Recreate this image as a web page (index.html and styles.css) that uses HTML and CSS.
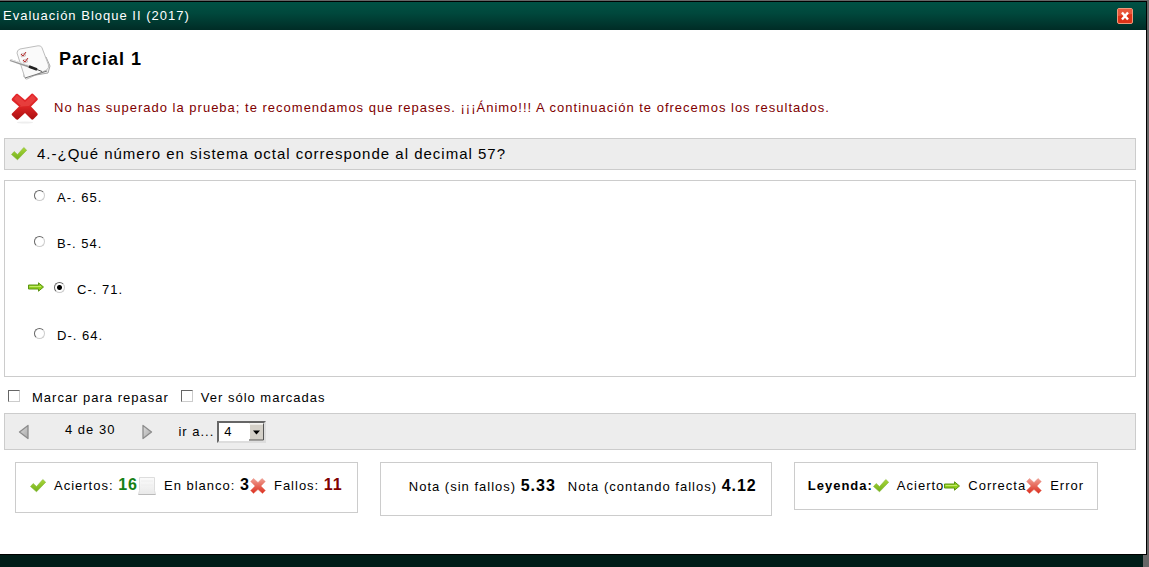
FILE: index.html
```html
<!DOCTYPE html>
<html lang="es">
<head>
<meta charset="utf-8">
<title>Evaluación Bloque II (2017)</title>
<link rel="stylesheet" href="styles.css">
</head>
<body>
<svg class="defs" aria-hidden="true">
  <defs>
    <linearGradient id="green" x1="0" y1="0" x2="0" y2="1"><stop offset="0" stop-color="#a9d638"/><stop offset="1" stop-color="#72b01c"/></linearGradient>
    <linearGradient id="red" x1="0" y1="0" x2="0" y2="1"><stop offset="0" stop-color="#f0a093"/><stop offset="1" stop-color="#dc2e1e"/></linearGradient>
    <linearGradient id="deep" x1="0" y1="0" x2="0" y2="1"><stop offset="0" stop-color="#e5262b"/><stop offset=".5" stop-color="#dc2424"/><stop offset="1" stop-color="#a90f10"/></linearGradient>
    <linearGradient id="grey" x1="0" y1="0" x2="1" y2="1"><stop offset="0" stop-color="#dcdcdc"/><stop offset="1" stop-color="#a8a8a8"/></linearGradient>
    <linearGradient id="paper" x1="0" y1="0" x2="0" y2="1"><stop offset="0" stop-color="#fbfbfb"/><stop offset="1" stop-color="#e9e9e9"/></linearGradient>
    <symbol id="check" viewBox="0 0 16 16"><path d="M.5 8.500 3.200 5.500l3.300 3L12.800 1.500 15.700 4.200 6.500 13.800Z" fill="url(#green)" stroke="#86b83a" stroke-width=".6"/></symbol>
    <symbol id="arrow" viewBox="0 0 16 16"><path d="M.5 6h10V3.800L15.500 8l-5 4.200V10H.5Z" fill="#8fcf1d" stroke="#5d9414"/><path d="M1.500 7.500H13" stroke="#c4ea68"/></symbol>
    <symbol id="cross" viewBox="0 0 16 16"><path d="M3.500.5 8 4.500l4-4L15.300 3.500 11 8l4.500 4.500-3 3L8 11.500l-4.500 4-3-3L5 8 .7 3.500Z" fill="url(#red)" stroke="#e8887c" stroke-width=".5"/></symbol>
  </defs>
</svg>
<main class="window">
  <header class="titlebar">
    <span>Evaluación Bloque II (2017)</span>
    <button class="close" type="button" aria-label="Cerrar">
      <svg viewBox="0 0 16 16"><rect x=".5" y=".5" width="15" height="15" rx="1.500" fill="#dc3217" stroke="#ef9a7d"/><path d="M1 8V1h14v5Z" fill="#e8583c"/><path d="m5 4.500 6 7m0-7-6 7" stroke="#fff" stroke-width="2.400"/></svg>
    </button>
  </header>
  <div class="content">
    <div class="heading">
      <svg class="exam" viewBox="0 0 42 36" aria-hidden="true"><path d="M15 32 39 28l2-7-4-9-22 10Z" fill="#eee" stroke="#a5a5a5"/><path d="M8 8Q8 5 11 4L29 .8q3-.6 4 2L39.500 20q.8 3-2 5L18 34q-1.500.5-2-1Z" fill="#fafafa" stroke="#bdbdbd"/><path d="M16 33 38 26" stroke="#777"/><path d="m12 9 4-1 .5 3-4 1Zm2 6 4-1 .5 3-4 1Z" fill="#f6e5e5" stroke="#b9a5a5" stroke-width=".6"/><path d="m12 9 2 2 3-4m-3 8 2 2 3-4" fill="none" stroke="#b42a2a"/><path d="M1 15 24 23" stroke="#999" stroke-width="2"/><path d="M1 14.500 22 21" stroke="#e8e8e8"/><path d="m20 21.500 8 3" stroke="#222" stroke-width="2.500"/><path d="m28 24.500 5 2" stroke="#555"/></svg>
      <h1>Parcial 1</h1>
    </div>
    <div class="result">
      <svg class="fail" viewBox="0 0 28 31" aria-hidden="true"><ellipse cx="14" cy="29.500" rx="8" ry="1" fill="#eee"/><path d="M6.500.8 14 7l6.500-6.200q1-.6 2 .4l4 4q.8 1 0 1.800L20 13.500l6.500 7q.6 1-.2 1.800l-4 4q-1 .7-2 0L14 20l-7 6.500q-1 .6-2-.2l-4-4q-.8-1 0-1.800l7-7L1 7.500Q.3 6.500 1 5.500L5 1q.7-.6 1.500-.2Z" fill="url(#deep)"/><path d="M6 2 14 9l7.500-7 3.500 4-7 7q-8 0-12 2l4-2-7-7Z" fill="#ef5552" opacity=".5"/></svg>
      <p>No has superado la prueba; te recomendamos que repases. ¡¡¡Ánimo!!! A continuación te ofrecemos los resultados.</p>
    </div>
    <div class="question">
      <svg class="icon" aria-hidden="true"><use href="#check"/></svg>
      <h2>4.-¿Qué número en sistema octal corresponde al decimal 57?</h2>
    </div>
    <div class="options">
      <div class="option"><input type="radio" name="answer" id="a"><label for="a">A-. 65.</label></div>
      <div class="option"><input type="radio" name="answer" id="b"><label for="b">B-. 54.</label></div>
      <div class="option correct"><svg class="icon" aria-hidden="true"><use href="#arrow"/></svg><input type="radio" name="answer" id="c" checked><label for="c">C-. 71.</label></div>
      <div class="option"><input type="radio" name="answer" id="d"><label for="d">D-. 64.</label></div>
    </div>
    <div class="marks">
      <input type="checkbox" id="mark"><label class="mark-label" for="mark">Marcar para repasar</label>
      <input type="checkbox" id="only"><label for="only">Ver sólo marcadas</label>
    </div>
    <nav class="pager">
      <button type="button" aria-label="Anterior"><svg viewBox="0 0 12 16"><path d="M10 1.500v13L1.500 8Z" fill="url(#grey)" stroke="#8c8c8c" stroke-width="1.300" stroke-linejoin="round"/></svg></button>
      <span class="count">4 de 30</span>
      <button type="button" aria-label="Siguiente"><svg viewBox="0 0 12 16"><path d="M2 1.500v13L10.500 8Z" fill="url(#grey)" stroke="#8c8c8c" stroke-width="1.300" stroke-linejoin="round"/></svg></button>
      <label class="goto" for="goto">ir a...</label>
      <span class="picker"><select id="goto"><option>4</option></select><svg class="drop" viewBox="0 0 15 17" aria-hidden="true"><path d="M0 0h15v17H0Z" fill="#d4d0c8"/><path d="M.5 16V.5H14" fill="none" stroke="#fff"/><path d="M0 16.500h14.500V0" fill="none" stroke="#555"/><path d="M4 7h7l-3.500 4Z"/></svg></span>
    </nav>
    <div class="summary">
      <div class="panel totals">
        <svg class="icon" aria-hidden="true"><use href="#check"/></svg><span class="item">Aciertos: <b class="num good">16</b></span>
        <svg class="blank" viewBox="0 0 18 18" aria-hidden="true"><path d="M1.500.5h15v13l1 4H.5l1-4Z" fill="url(#paper)" stroke="#ddd"/><path d="M.5 17.500h17" stroke="#bbb"/><path d="M3 4h12M3 8h12" stroke="#eee"/></svg><span class="item">En blanco: <b class="num">3</b></span>
        <svg class="icon" aria-hidden="true"><use href="#cross"/></svg><span class="item">Fallos: <b class="num bad">11</b></span>
      </div>
      <div class="panel grades">
        <span>Nota (sin fallos) <b class="num">5.33</b></span>
        <span>Nota (contando fallos) <b class="num">4.12</b></span>
      </div>
      <div class="panel legend">
        <b>Leyenda:</b><svg class="icon" aria-hidden="true"><use href="#check"/></svg><span class="item">Acierto</span><svg class="icon" aria-hidden="true"><use href="#arrow"/></svg><span class="item">Correcta</span><svg class="icon" aria-hidden="true"><use href="#cross"/></svg><span class="item">Error</span>
      </div>
    </div>
  </div>
</main>
<footer class="strip"></footer>
</body>
</html>
```
FILE: styles.css
```css
* { box-sizing: border-box; }
body {
  margin: 0;
  min-height: 100vh;
  display: flex;
  flex-direction: column;
  padding-top: 1px;
  background: #666;
  color: #000;
  font: 13px/16px "Liberation Sans", Arial, sans-serif;
  letter-spacing: 1px;
}
h1, h2, p { margin: 0; }
svg { display: block; flex: none; }
button { padding: 0; border: 0; background: none; }
input { flex: none; margin: 0; appearance: none; background: #fff; }
.defs { position: absolute; width: 0; height: 0; }
.icon { width: 16px; height: 16px; }

.window {
  margin-right: 2px;
  border: solid #000;
  border-width: 1px 1px 1px 0;
  background: #fff;
}
.titlebar {
  display: flex;
  align-items: center;
  justify-content: space-between;
  height: 28px;
  padding: 0 13px 0 3px;
  background: linear-gradient(#005144, #00483c 40%, #002c26);
  color: #fff;
}
.close svg { width: 16px; height: 16px; }
.content { padding: 15px 10px 38px 4px; }

.heading { display: flex; gap: 8px; padding-left: 5px; }
.exam { width: 42px; height: 36px; }
h1 { padding-top: 4px; font-size: 18px; line-height: 20px; }
.result {
  display: flex;
  gap: 15px;
  margin-top: 12px;
  padding-left: 7px;
  color: #800000;
}
.result p { padding-top: 7px; }
.fail { width: 28px; height: 31px; }

.question {
  display: flex;
  align-items: center;
  gap: 10px;
  height: 32px;
  margin-top: 14px;
  padding: 0 6px;
  border: 1px solid #ccc;
  background: #ededed;
}
h2 { font-size: 15px; font-weight: 400; }
.options {
  height: 197px;
  margin-top: 10px;
  padding: 9px 23px;
  border: 1px solid #ccc;
}
.option { display: flex; height: 46px; padding-left: 6px; }
.option.correct { padding-left: 0; }
.option.correct .icon { margin: -3px 10px 0 0; }
.option label { padding: 0 0 0 12px; }
input[type="radio"] {
  width: 11px;
  height: 11px;
  border: 1px solid;
  border-color: #666 #ccc #ccc #666;
  border-radius: 50%;
}
input[type="radio"]:checked { background: radial-gradient(#000 0 2px, #fff 3px); }

.marks { display: flex; height: 36px; padding: 13px 4px 0; }
.marks label { padding-left: 8px; }
.marks .mark-label { padding: 0 12px 0 12px; }
input[type="checkbox"] {
  width: 12px;
  height: 12px;
  border: 1px solid;
  border-color: #666 #ccc #ccc #666;
}

.pager {
  display: flex;
  align-items: center;
  height: 37px;
  padding-left: 13px;
  border: 1px solid #ccc;
  background: #ededed;
}
.pager svg { width: 12px; height: 16px; }
.count { padding: 0 26px 4px 35px; }
.goto { padding-left: 25px; }
.picker {
  display: flex;
  width: 49px;
  height: 22px;
  margin-left: 3px;
  border: 2px solid;
  border-color: #666 #ddd #ddd #666;
  background: #fff;
}
select {
  flex: 1;
  min-width: 0;
  padding: 0 0 0 5px;
  border: 0;
  appearance: none;
  background: #fff;
  font: inherit;
}
.picker .drop { width: 15px; height: 18px; }

.summary {
  display: flex;
  align-items: flex-start;
  gap: 22px;
  padding: 12px 0 0 11px;
}
.panel {
  display: flex;
  align-items: center;
  border: 1px solid #ccc;
  line-height: 20px;
  white-space: nowrap;
}
.totals { padding: 13px 14px 16px 14px; }
.blank { width: 18px; height: 18px; }
.totals .item { padding-left: 8px; }
.grades { gap: 12px; padding: 14px 14px 18px 28px; }
.legend { padding: 13px; }
.legend .item { padding-left: 8px; }
.num { font-size: 16px; line-height: 16px; }
.good { color: #168016; }
.bad { color: #800000; }

.strip {
  flex: 1;
  min-height: 12px;
  margin-right: 6px;
  background: #001d18;
}
```
